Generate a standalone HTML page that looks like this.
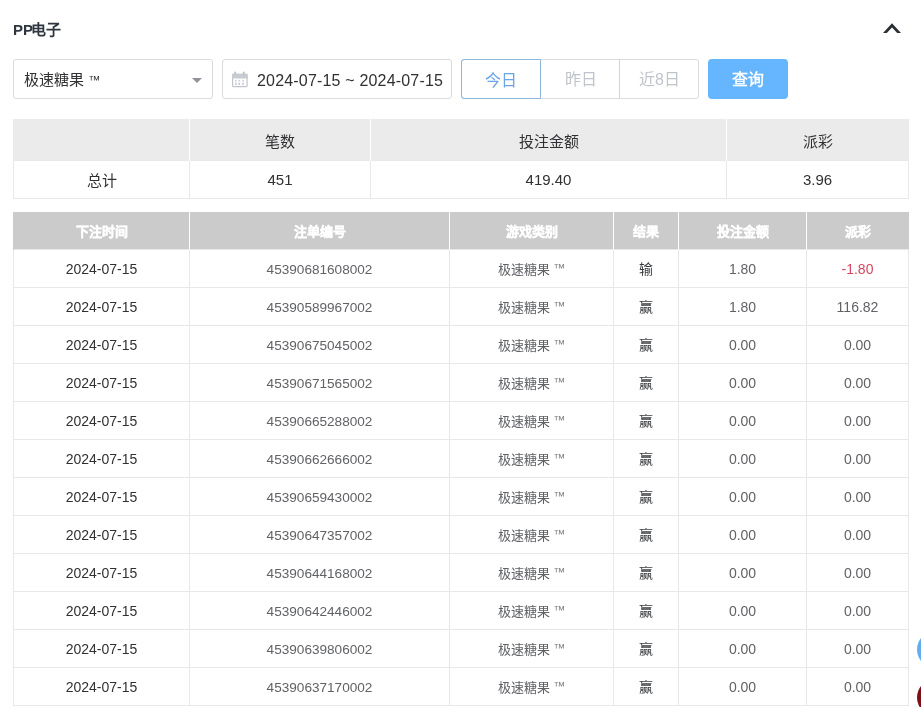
<!DOCTYPE html>
<html lang="zh-CN"><head><meta charset="utf-8">
<style>
*{box-sizing:border-box;margin:0;padding:0}
html,body{will-change:transform;width:921px;height:707px;overflow:hidden;background:#fff;font-family:"Liberation Sans",sans-serif;position:relative}
.abs{position:absolute}
.title{left:13px;top:20px;font-size:15px;font-weight:bold;color:#303640;line-height:20px}
.chev{left:881px;top:20px;width:22px;height:16px}
.box{border:1px solid #dcdcdc;border-radius:3px;background:#fff}
.sel{left:13px;top:59px;width:200px;height:40px}
.sel .t{position:absolute;left:10px;top:10px;font-size:15px;line-height:20px;color:#303133}
.date{left:222px;top:59px;width:230px;height:40px}
.date .t{position:absolute;left:34px;top:11px;letter-spacing:0.18px;font-size:16px;line-height:20px;color:#303133;white-space:nowrap}
.cal{position:absolute;left:9px;top:12px}
.grp{left:461px;top:59px;width:238px;height:40px;border:1px solid #dcdcdc;border-radius:3px}
.gb{position:absolute;top:-1px;height:40px;width:80px;text-align:center;line-height:38px;padding-top:1.5px;font-size:16px;color:#c0c4cc}
.gb1{left:-1px;border:1px solid #8cb6da;border-radius:3px 0 0 3px;color:#6aa5e6}
.gb2{left:79px;}
.gb3{left:157px;border-left:1px solid #d4d4d4}
.q{left:708px;top:59px;width:80px;height:40px;background:#66b5ff;border-radius:4px;color:#fff;font-size:16px;text-align:center;line-height:40px;padding-top:0.5px;-webkit-text-stroke:0.4px #fff}
table{border-collapse:collapse;table-layout:fixed;position:absolute;left:13px}
td,th{text-align:center;overflow:hidden;white-space:nowrap}
.sum{top:119px;width:895px}
.sum th{height:41px;padding-top:2px;background:#ebebeb;font-weight:normal;font-size:15px;color:#303133;border-left:1px solid #fff}
.sum th:first-child{border-left:1px solid #ebebeb}
.sum td{height:38px;font-size:15px;color:#303133;border:1px solid #e8e8e8}
.main{top:212px;width:895px}
.main th{height:37px;padding-top:1px;background:#cbcbcb;color:#fff;font-size:13px;font-weight:bold;-webkit-text-stroke:0.3px #fff;border-left:1px solid #fff}
.main th:first-child{border-left:1px solid #cbcbcb}
.main td{height:38px;padding-top:2px;font-size:14px;color:#606266;border:1px solid #e8e8e8}
.main td.d{color:#303133}
.main td.g{font-size:13px;padding-top:0}
.tm{color:#7a7d82;font-size:12px;position:relative;top:-1.5px}
.main td.r{padding-top:0;color:#3a3c40}
.main td.o{font-size:13.6px}
.red{color:#d4475f!important}
</style></head><body>
<div class="abs title">PP<span style="margin-left:-1.8px">电子</span></div>
<svg class="abs" style="left:0;top:0" width="921" height="60"><polygon points="883,33 892,23.3 901,33 897.2,33 892,27.5 886.8,33" fill="#2b2f36"/></svg>
<div class="abs box sel"><span class="t">极速糖果 <span style="font-size:12px;position:relative;top:-1px">™</span></span><svg class="tri" width="12" height="8" style="position:absolute;left:178px;top:17.7px"><polygon points="0,0 10,0 5,5" fill="#909399"/></svg></div>
<div class="abs box date">

<span class="t">2024-07-15 ~ 2024-07-15</span></div>
<svg class="abs" style="left:232px;top:71px" width="17" height="18" viewBox="0 0 17 18">
<rect x="0.6" y="3.4" width="14.5" height="12.3" rx="1" fill="none" stroke="#c0c4cc" stroke-width="1.2"/>
<rect x="0" y="2.8" width="15.7" height="4.7" fill="#c8ccd2"/>
<rect x="2.3" y="0.7" width="1.6" height="2.8" fill="#b8bcc4"/><rect x="10.9" y="0.7" width="1.7" height="2.8" fill="#b8bcc4"/>
<g fill="#c8ccd2"><rect x="3.1" y="8.9" width="1.6" height="1.5"/><rect x="6.5" y="8.9" width="1.6" height="1.5"/><rect x="10.3" y="8.9" width="1.6" height="1.5"/>
<rect x="3.1" y="11.6" width="1.6" height="2.4"/><rect x="6.5" y="11.6" width="1.6" height="2.4"/><rect x="10.3" y="11.6" width="1.6" height="2.4"/></g>
</svg>

<div class="abs grp"><div class="gb gb1">今日</div><div class="gb gb2">昨日</div><div class="gb gb3">近8日</div></div>
<div class="abs q">查询</div>

<table class="sum">
<colgroup><col style="width:176px"><col style="width:181px"><col style="width:356px"><col style="width:182px"></colgroup>
<tr><th></th><th>笔数</th><th>投注金额</th><th>派彩</th></tr>
<tr><td>总计</td><td>451</td><td>419.40</td><td>3.96</td></tr>
</table>

<table class="main">
<colgroup><col style="width:176px"><col style="width:260px"><col style="width:164px"><col style="width:65px"><col style="width:128px"><col style="width:102px"></colgroup>
<tr><th>下注时间</th><th>注单编号</th><th>游戏类别</th><th>结果</th><th>投注金额</th><th>派彩</th></tr>
<tbody id="rows">
<tr><td class="d">2024-07-15</td><td class="o">45390681608002</td><td class="g">极速糖果 <span class="tm">™</span></td><td class="r">输</td><td>1.80</td><td class="red">-1.80</td></tr>
<tr><td class="d">2024-07-15</td><td class="o">45390589967002</td><td class="g">极速糖果 <span class="tm">™</span></td><td class="r">赢</td><td>1.80</td><td>116.82</td></tr>
<tr><td class="d">2024-07-15</td><td class="o">45390675045002</td><td class="g">极速糖果 <span class="tm">™</span></td><td class="r">赢</td><td>0.00</td><td>0.00</td></tr>
<tr><td class="d">2024-07-15</td><td class="o">45390671565002</td><td class="g">极速糖果 <span class="tm">™</span></td><td class="r">赢</td><td>0.00</td><td>0.00</td></tr>
<tr><td class="d">2024-07-15</td><td class="o">45390665288002</td><td class="g">极速糖果 <span class="tm">™</span></td><td class="r">赢</td><td>0.00</td><td>0.00</td></tr>
<tr><td class="d">2024-07-15</td><td class="o">45390662666002</td><td class="g">极速糖果 <span class="tm">™</span></td><td class="r">赢</td><td>0.00</td><td>0.00</td></tr>
<tr><td class="d">2024-07-15</td><td class="o">45390659430002</td><td class="g">极速糖果 <span class="tm">™</span></td><td class="r">赢</td><td>0.00</td><td>0.00</td></tr>
<tr><td class="d">2024-07-15</td><td class="o">45390647357002</td><td class="g">极速糖果 <span class="tm">™</span></td><td class="r">赢</td><td>0.00</td><td>0.00</td></tr>
<tr><td class="d">2024-07-15</td><td class="o">45390644168002</td><td class="g">极速糖果 <span class="tm">™</span></td><td class="r">赢</td><td>0.00</td><td>0.00</td></tr>
<tr><td class="d">2024-07-15</td><td class="o">45390642446002</td><td class="g">极速糖果 <span class="tm">™</span></td><td class="r">赢</td><td>0.00</td><td>0.00</td></tr>
<tr><td class="d">2024-07-15</td><td class="o">45390639806002</td><td class="g">极速糖果 <span class="tm">™</span></td><td class="r">赢</td><td>0.00</td><td>0.00</td></tr>
<tr><td class="d">2024-07-15</td><td class="o">45390637170002</td><td class="g">极速糖果 <span class="tm">™</span></td><td class="r">赢</td><td>0.00</td><td>0.00</td></tr>
</tbody>
</table>
<div class="abs" style="left:917.2px;top:631.1px;width:37px;height:37px;border-radius:50%;background:#62aef0"></div>
<div class="abs" style="left:917.2px;top:678.5px;width:37px;height:37px;border-radius:50%;background:#7d1016"></div>
</body></html>
